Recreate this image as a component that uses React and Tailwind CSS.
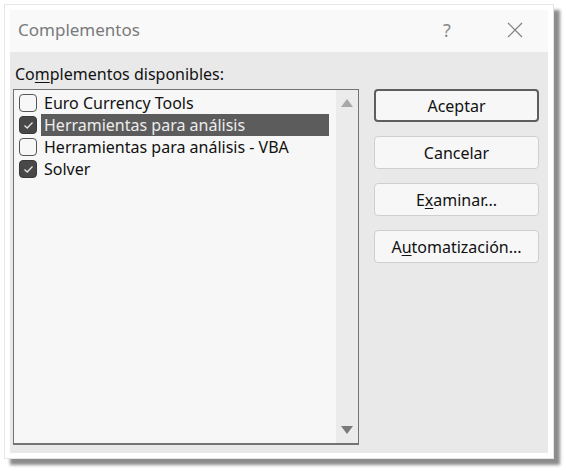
import React from "react";

const font = { fontFamily: '"Noto Sans", "Open Sans", sans-serif' };

function Check({ checked }) {
  return checked ? (
    <div className="w-[18px] h-[18px] rounded-[4px] bg-[#484848] border border-[#383838] flex items-center justify-center shrink-0">
      <svg width="11" height="9" viewBox="0 0 11 9">
        <path d="M1.5 4.5 L4.2 7 L9.5 1.5" fill="none" stroke="#e6e6e6" strokeWidth="1.3" />
      </svg>
    </div>
  ) : (
    <div className="w-[18px] h-[18px] rounded-[4px] bg-[#f7f7f7] border border-[#555555] shrink-0" />
  );
}

function Item({ label, checked, selected }) {
  return (
    <div className="flex items-center h-[22px] pl-[5px]">
      <Check checked={checked} />
      <div
        className={
          "ml-[4px] h-[22px] flex items-center pl-[3px] text-[16px] leading-none " +
          (selected ? "bg-[#5c5c5c] text-[#ececec] w-[288px]" : "text-[#111111]")
        }
      >
        {label}
      </div>
    </div>
  );
}

function Btn({ children, primary }) {
  return (
    <div
      className={
        "w-[165px] h-[33px] rounded-[4px] bg-[#f7f7f7] flex items-center justify-center text-[16px] text-[#111111] " +
        (primary ? "border-2 border-[#5e5e5e]" : "border border-[#cfcfcf]")
      }
    >
      {children}
    </div>
  );
}

export default function App() {
  return (
    <div className="w-[566px] h-[471px] bg-white p-[4px]" style={font}>
      <div className="w-[550px] h-[455px] bg-white border border-[#e6e6e6] p-[5px] shadow-[6px_6px_3px_rgba(0,0,0,0.45)]">
        <div className="h-[42px] bg-[#f9f9f9] flex items-center pl-[8px] pb-[2px] text-[17px] text-[#7a7a7a]">
          <span className="flex-1">Complementos</span>
          <span className="w-[20px] text-center mr-[50px] text-[18px] text-[#8a8a8a]">?</span>
          <svg width="16" height="16" viewBox="0 0 16 16" className="mr-[25px]">
            <path d="M1 1 L15 15 M15 1 L1 15" stroke="#808080" strokeWidth="1.2" />
          </svg>
        </div>
        <div className="h-[401px] bg-[#e9e9e9] flex pl-[3px]">
          <div className="flex flex-col">
            <div className="h-[22px] mt-[11px] mb-[4px] pl-[2px] text-[16px] text-[#111111] leading-[22px]">
              Co<span className="underline underline-offset-2">m</span>plementos disponibles:
            </div>
            <div className="w-[346px] h-[356px] border border-[#737373] border-b-2 bg-[#f7f7f7] flex">
              <div className="flex-1 pt-[2px]">
                <Item label="Euro Currency Tools" />
                <Item label="Herramientas para análisis" checked selected />
                <Item label="Herramientas para análisis - VBA" />
                <Item label="Solver" checked />
              </div>
              <div className="w-[22px] bg-[#ebebeb] flex flex-col items-center justify-between py-[9px]">
                <svg width="12" height="8" viewBox="0 0 12 8">
                  <path d="M6 0 L12 8 L0 8 Z" fill="#a8a8a8" />
                </svg>
                <svg width="12" height="8" viewBox="0 0 12 8">
                  <path d="M0 0 L12 0 L6 8 Z" fill="#7a7a7a" />
                </svg>
              </div>
            </div>
          </div>
          <div className="ml-[15px] mt-[37px] flex flex-col gap-[14px]">
            <Btn primary>Aceptar</Btn>
            <Btn>Cancelar</Btn>
            <Btn>
              <span>
                E<span className="underline underline-offset-2">x</span>aminar...
              </span>
            </Btn>
            <Btn>
              <span>
                A<span className="underline underline-offset-2">u</span>tomatización...
              </span>
            </Btn>
          </div>
        </div>
      </div>
    </div>
  );
}
